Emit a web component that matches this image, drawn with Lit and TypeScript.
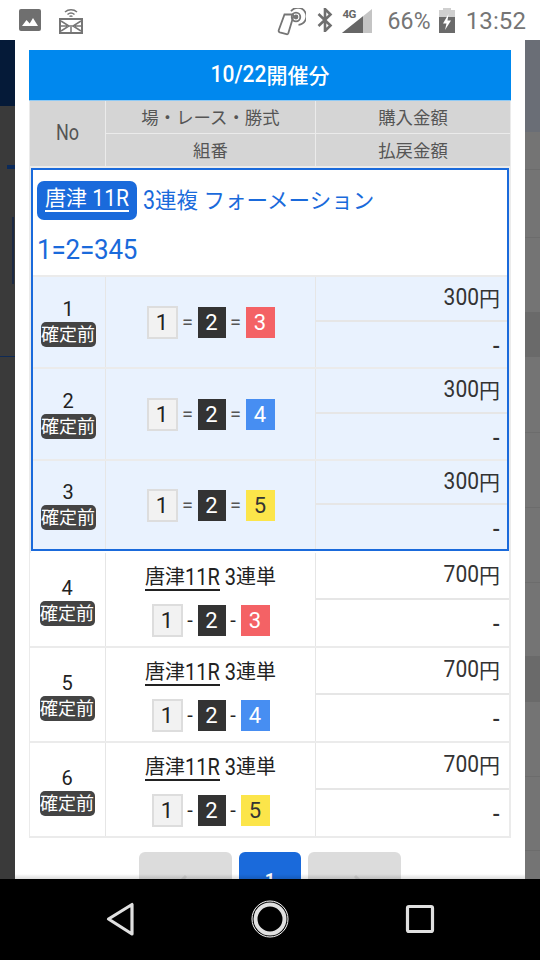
import { LitElement, html, css, svg } from "lit";
import { customElement } from "lit/decorators.js";

const COLORS: Record<number, string> = { 1: "w", 2: "k", 3: "r", 4: "b", 5: "y" };

@customElement("app-root")
export class AppRoot extends LitElement {
  static styles = css`
    :host { display: block; width: 540px; height: 960px; overflow: hidden; font-family: Roboto, "Noto Sans CJK JP", sans-serif; color: #333; background: #fff; }
    .page { display: flex; flex-direction: column; height: 960px; }
    .status { height: 40px; flex: none; display: flex; justify-content: space-between; align-items: flex-start; background: #fff; color: #757575; }
    .sl, .sr { display: flex; align-items: flex-start; }
    .sl { padding: 9px 0 0 19px; gap: 18px; }
    .sl svg:nth-child(2) { margin-top: -2px; }
    .sr { padding-top: 8px; padding-right: 14px; }
    .sr svg { display: block; }
    .bt { margin-left: 11px; }
    .sig { position: relative; width: 30px; height: 25px; margin-left: 9px; }
    .sig span { position: absolute; left: 0; top: 0; font-size: 11.5px; line-height: 13px; font-weight: 700; letter-spacing: -0.5px; color: #666; }
    .sig svg { position: absolute; left: 0; top: 0; }
    .pct { font-size: 23px; line-height: 27px; margin-left: 15px; margin-right: 8px; letter-spacing: 0.2px; }
    .time { font-size: 24px; line-height: 27px; margin-left: 11px; letter-spacing: 0.1px; }
    .mid { flex: 1; display: flex; overflow: hidden; min-height: 0; }
    .bgl { width: 15px; flex: none; background:
      linear-gradient(#051a38, #051a38) 0 0 / 100% 66px no-repeat,
      linear-gradient(#0b2a5a, #0b2a5a) 7px 125px / 8px 4px no-repeat,
      linear-gradient(#1d2a44, #1d2a44) 12px 177px / 2px 67px no-repeat,
      linear-gradient(#0f2a55, #0f2a55) 0 316px / 100% 1px no-repeat,
      #3a3a3a; }
    .bgr { width: 15px; flex: none; background:
      linear-gradient(#6a6e76, #6a6e76) 0 0 / 100% 92px no-repeat,
      linear-gradient(#6a6a6a, #6a6a6a) 0 272px / 100% 45px no-repeat,
      linear-gradient(#6a6a6a, #6a6a6a) 0 616px / 100% 46px no-repeat,
      linear-gradient(#6c6c6c, #6c6c6c) 0 129px / 100% 1px no-repeat,
      linear-gradient(#6c6c6c, #6c6c6c) 0 197px / 100% 1px no-repeat,
      linear-gradient(#6c6c6c, #6c6c6c) 0 392px / 100% 1px no-repeat,
      linear-gradient(#6c6c6c, #6c6c6c) 0 467px / 100% 1px no-repeat,
      linear-gradient(#6c6c6c, #6c6c6c) 0 542px / 100% 1px no-repeat,
      linear-gradient(#6c6c6c, #6c6c6c) 0 736px / 100% 1px no-repeat,
      linear-gradient(#6c6c6c, #6c6c6c) 0 810px / 100% 1px no-repeat,
      #747474; }
    .sheet { flex: 1; min-width: 0; position: relative; overflow: hidden; background: #fff; padding: 10px 14px 0; }
    .sheet::after { content: ""; position: absolute; left: 0; right: 0; bottom: 0; height: 5px; background: linear-gradient(rgba(0,0,0,0), rgba(0,0,0,.14)); }
    .d { display: inline-block; transform: scaleY(1.18); }
    .ul { display: inline-block; border-bottom: 2px solid currentColor; line-height: 24px; height: 24px; }
    .ttl { height: 51px; box-sizing: border-box; padding-bottom: 3px; background: #0088ee; border-bottom: 1px solid #8fcaf5; color: #fff; font-size: 21px; font-weight: 500; display: flex; align-items: center; justify-content: center; }
    .head { display: grid; grid-template-columns: 75px 209px 1fr; grid-template-rows: 32px 32px; gap: 1px; padding: 0 1px 2px 1px; background: #ebebeb; font-size: 17.4px; color: #555; }
    .head > div { background: #d5d5d5; display: flex; align-items: center; justify-content: center; padding-bottom: 2px; box-sizing: border-box; }
    .head .no { grid-row: 1 / 3; font-size: 18px; }
    .sel { padding: 0 0 2px; border-left: 2px solid #ebebeb; border-right: 2px solid #ebebeb; }
    .box { border: 2px solid #1a6adb; background: #fff; }
    .box .t { height: 105px; padding: 11px 0 0 4px; color: #1a6adb; font-size: 21.5px; box-sizing: border-box; }
    .tl { display: flex; align-items: center; gap: 6px; height: 39px; }
    .tl > span { padding-bottom: 4px; box-sizing: border-box; }
    .chip { background: #1a6adb; color: #fff; border-radius: 7px; height: 39px; width: 100px; font-size: 21px; display: flex; align-items: center; justify-content: center; padding-bottom: 3px !important; }
    .form { font-size: 26px; line-height: 30px; margin-top: 14px; letter-spacing: -0.2px; }
    .form .d { transform: scaleY(1.08); }
    .row { display: grid; grid-template-columns: 73px 210px 1fr; border-top: 2px solid #ebebeb; background: #e9f2fe; height: 90px; }
    .box .row:last-child { height: 88px; }
    .plain .row { background: #fff; grid-template-columns: 76px 210px 1fr; height: 93px; border-left: 1px solid #ebebeb; border-right: 2px solid #ebebeb; border-top: 0; border-bottom: 2px solid #ebebeb; }
    .c1 { display: flex; flex-direction: column; align-items: center; justify-content: center; gap: 1px; border-right: 1px solid #e6e6e6; font-size: 20px; line-height: 24px; color: #222; }
    .box .c1 { padding-right: 2px; }
    .plain .c1 { padding-top: 2px; padding-right: 1px; }
    .st { background: #444; color: #fff; border-radius: 5px; font-size: 18px; line-height: 25px; height: 25px; width: 55px; text-align: center; white-space: nowrap; }
    .c2 { display: flex; flex-direction: column; align-items: center; justify-content: center; border-right: 1px solid #e6e6e6; }
    .plain .c2 { padding-top: 2px; }
    .bet { font-size: 20px; line-height: 24px; color: #222; margin-bottom: 13px; }
    .nums { display: flex; align-items: center; font-size: 22px; color: #444; }
    .sep { width: 20px; text-align: center; font-size: 20px; color: #555; }
    .nums.h .sep { width: 15px; color: #222; }
    .n { width: 29px; height: 31px; display: flex; align-items: center; justify-content: center; font-size: 22px; }
    .n.w { width: 31px; height: 33px; box-sizing: border-box; background: #f2f2f2; border: 2px solid #ddd; color: #222; }
    .n.k { width: 28px; background: #333; color: #fff; }
    .n.r { background: #f46265; color: #fff; }
    .n.b { background: #478ef2; color: #fff; }
    .n.y { background: #fce54a; color: #333; }
    .c3 { display: grid; grid-template-rows: 1fr 1fr; }
    .c3 div { display: flex; align-items: center; justify-content: flex-end; padding: 0 9px 0 0; font-size: 21px; color: #333; }
    .c3 div:first-child { border-bottom: 2px solid #e6e6e6; padding-bottom: 3px; }
    .c3 div:last-child { font-size: 22px; font-weight: 500; padding-top: 4px; }
    .box .c3 div { padding-right: 7px; }
    .pager { display: flex; justify-content: center; gap: 7px; margin-top: 14px; height: 70px; }
    .pg { width: 93px; height: 70px; background: #dcdcdc; border-radius: 6px; display: flex; justify-content: center; padding-top: 21px; box-sizing: border-box; }
    .pg.on { width: 62px; background: #1a6adb; color: #fff; font-size: 18px; font-weight: 700; line-height: 24px; padding-top: 16px; }
    .nav { height: 81px; flex: none; background: #000; display: flex; align-items: center; justify-content: center; position: relative; z-index: 1; }
    .nav svg { display: block; }
  `;

  nums(a: number[], sep: string) {
    return html`<div class="nums ${sep === "-" ? "h" : ""}">
      ${a.map((n, i) => html`${i ? html`<span class="sep">${sep}</span>` : ""}<span class="n ${COLORS[n]}">${n}</span>`)}
    </div>`;
  }

  imgIcon() {
    return svg`<svg width="22" height="22" viewBox="0 0 22 22"><rect width="22" height="22" rx="2" fill="#6f6f6f"/><path d="M3 17l4.5-6 3.2 3.6L14 9l5 8z" fill="#fff"/></svg>`;
  }
  castIcon() {
    return svg`<svg width="24" height="27" viewBox="0 0 24 27" fill="none" stroke="#757575">
      <path d="M6 5c3.4-3 8.6-3 12 0M8.500 7.500c2-1.700 5-1.700 7 0" stroke-width="1.500"/><path d="M10.500 9.500c1-.7 2-.7 3 0" stroke-width="1.500"/>
      <rect x="1" y="12" width="22" height="14" stroke-width="2"/>
      <path d="M2 14l8 5-8 5M22 14l-8 5 8 5M10 19h4M2 19h6M16 19h6M12 20v5" stroke-width="1.500"/>
    </svg>`;
  }
  nfcIcon() {
    return svg`<svg width="30" height="28" viewBox="0 0 30 28" fill="none" stroke="#757575" stroke-width="1.800">
      <path d="M7.500 6.500h7.600c1 0 1.600.8 1.300 1.700l-5.100 17c-.3.800-1 1.200-1.800 1l-6.700-1.900c-.9-.3-1.400-1.200-1.100-2z" transform="translate(1 0)"/>
      <path d="M15 3.300A8.500 8.500 0 1 1 22.500 16.800"/>
      <circle cx="20" cy="9" r="4.300"/><circle cx="20" cy="9" r="1.500" fill="#757575"/>
    </svg>`;
  }
  btIcon() {
    return svg`<svg width="16" height="24" viewBox="0 0 16 24" fill="none" stroke="#6f6f6f" stroke-width="2.600"><path d="M1.500 6l12 11.500L8 23V1l5.500 5.500L1.500 18"/></svg>`;
  }
  sigIcon() {
    return svg`<svg width="30" height="25" viewBox="0 0 30 25"><path d="M0 25L30 1v24z" fill="#c4c4c4"/><path d="M0 25L21 8.200V25z" fill="#666"/></svg>`;
  }
  batIcon() {
    return svg`<svg width="16" height="25" viewBox="0 0 16 25"><path d="M4 0h8v2h4v23H0V2h4z" fill="#cfcfcf"/><path d="M0 9h16v16H0z" fill="#6a6a6a"/><path d="M9.500 6L4 15.500h3.500L6 22l6-9.500H8.500z" fill="#fff"/></svg>`;
  }

  render() {
    const fmt = [3, 4, 5];
    return html`<div class="page">
      <div class="status">
        <div class="sl">${this.imgIcon()}${this.castIcon()}</div>
        <div class="sr">
          <span>${this.nfcIcon()}</span>
          <span class="bt">${this.btIcon()}</span>
          <div class="sig">${this.sigIcon()}<span>4G</span></div>
          <div class="pct">66%</div>
          ${this.batIcon()}
          <div class="time">13:52</div>
        </div>
      </div>
      <div class="mid">
        <div class="bgl"></div>
        <div class="sheet">
          <div class="ttl"><span class="d">10/22</span>開催分</div>
          <div class="head">
            <div class="no"><span class="d">No</span></div><div>場・レース・勝式</div><div>購入金額</div><div>組番</div><div>払戻金額</div>
          </div>
          <div class="sel"><div class="box">
            <div class="t">
              <div class="tl"><span class="chip"><span class="ul">唐津 <span class="d">11R</span></span></span><span><span class="d">3</span>連複 フォーメーション</span></div>
              <div class="form"><span class="d">1=2=345</span></div>
            </div>
            ${fmt.map((n, i) => html`<div class="row">
              <div class="c1"><span>${i + 1}</span><span class="st">確定前</span></div>
              <div class="c2">${this.nums([1, 2, n], "=")}</div>
              <div class="c3"><div><span class="d">300</span>円</div><div>-</div></div>
            </div>`)}
          </div></div>
          <div class="plain">
            ${fmt.map((n, i) => html`<div class="row">
              <div class="c1"><span>${i + 4}</span><span class="st">確定前</span></div>
              <div class="c2"><div class="bet"><span class="ul">唐津<span class="d">11R</span></span> <span class="d">3</span>連単</div>${this.nums([1, 2, n], "-")}</div>
              <div class="c3"><div><span class="d">700</span>円</div><div>-</div></div>
            </div>`)}
          </div>
          <div class="pager">
            <div class="pg"><svg width="20" height="12" viewBox="0 0 20 12" fill="none" stroke="#cbcbcb" stroke-width="3"><path d="M2 11L10 3"/></svg></div>
            <div class="pg on">1</div>
            <div class="pg"><svg width="20" height="12" viewBox="0 0 20 12" fill="none" stroke="#cbcbcb" stroke-width="3"><path d="M18 11L10 3"/></svg></div>
          </div>
        </div>
        <div class="bgr"></div>
      </div>
      <div class="nav">
        <svg width="540" height="81" viewBox="0 0 540 81" fill="none" stroke="#e0e0e0" stroke-width="3.200" stroke-linejoin="round">
          <path d="M108.500 40L132 25.500V55z"/>
          <circle cx="270" cy="40" r="14.500" stroke-width="4"/>
          <circle cx="270" cy="40" r="18" stroke="#fff" stroke-width="1"/>
          <rect x="407.500" y="27.500" width="25" height="25" rx="1.500"/>
        </svg>
      </div>
    </div>`;
  }
}
